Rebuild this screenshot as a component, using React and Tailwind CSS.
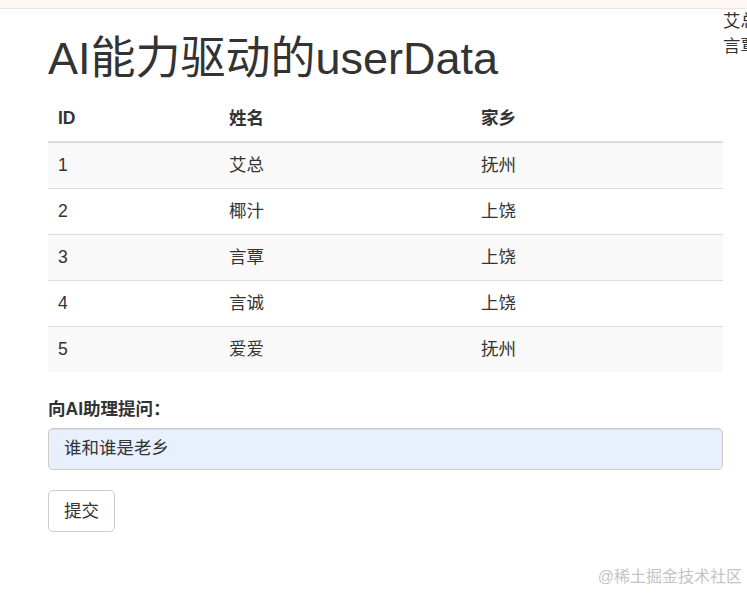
const users = [
  { id: 1, name: "艾总", home: "抚州" },
  { id: 2, name: "椰汁", home: "上饶" },
  { id: 3, name: "言覃", home: "上饶" },
  { id: 4, name: "言诚", home: "上饶" },
  { id: 5, name: "爱爱", home: "抚州" },
];

export default function App() {
  return (
    <div
      className="relative h-[595px] w-[747px] overflow-hidden bg-white text-[17.5px] leading-[25px] text-[#333]"
      style={{ fontFamily: '"Liberation Sans", "Noto Sans CJK SC", sans-serif' }}
    >
      {/* top strip */}
      <div className="h-[9px] border-b border-[#ece6e1] bg-[#fdf8f3]" />

      <div className="flex">
        {/* main column */}
        <div className="ml-[48px] w-[675px] shrink-0">
          <h1 className="mt-[25px] mb-[12px] text-[45px] leading-[49.5px] font-normal">
            AI能力驱动的userData
          </h1>

          <table className="mb-[25px] w-full border-collapse text-left">
            <thead>
              <tr className="border-b-[2.5px] border-[#ddd]">
                <th className="w-[171px] px-[10px] py-[10px] font-bold">ID</th>
                <th className="w-[252px] px-[10px] py-[10px] font-bold">姓名</th>
                <th className="w-[252px] px-[10px] py-[10px] font-bold">家乡</th>
              </tr>
            </thead>
            <tbody>
              {users.map((u, i) => (
                <tr
                  key={u.id}
                  className={
                    "border-t border-[#ddd] " + (i % 2 === 0 ? "bg-[#f9f9f9]" : "bg-white")
                  }
                >
                  <td className="px-[10px] py-[10px]">{u.id}</td>
                  <td className="px-[10px] py-[10px]">{u.name}</td>
                  <td className="px-[10px] py-[10px]">{u.home}</td>
                </tr>
              ))}
            </tbody>
          </table>

          {/* form */}
          <div className="mb-[20px]">
            <label className="mb-[6px] block font-bold">向AI助理提问：</label>
            <div className="flex h-[42.5px] items-center rounded-[5px] border border-[#ccc] bg-[#e8f0fe] px-[15px] shadow-[inset_0_1px_1px_rgba(0,0,0,0.075)]">
              谁和谁是老乡
            </div>
          </div>
          <button className="h-[42px] rounded-[5px] border border-[#ccc] bg-white px-[15px] text-[#333]">
            提交
          </button>
        </div>

        {/* overflowed list */}
        <div className="shrink-0 whitespace-nowrap">
          <div>艾总</div>
          <div>言覃</div>
        </div>
      </div>

      {/* watermark */}
      <div className="absolute right-[5px] bottom-[6px] text-[16px] text-[#c4c4c4]">
        @稀土掘金技术社区
      </div>
    </div>
  );
}
